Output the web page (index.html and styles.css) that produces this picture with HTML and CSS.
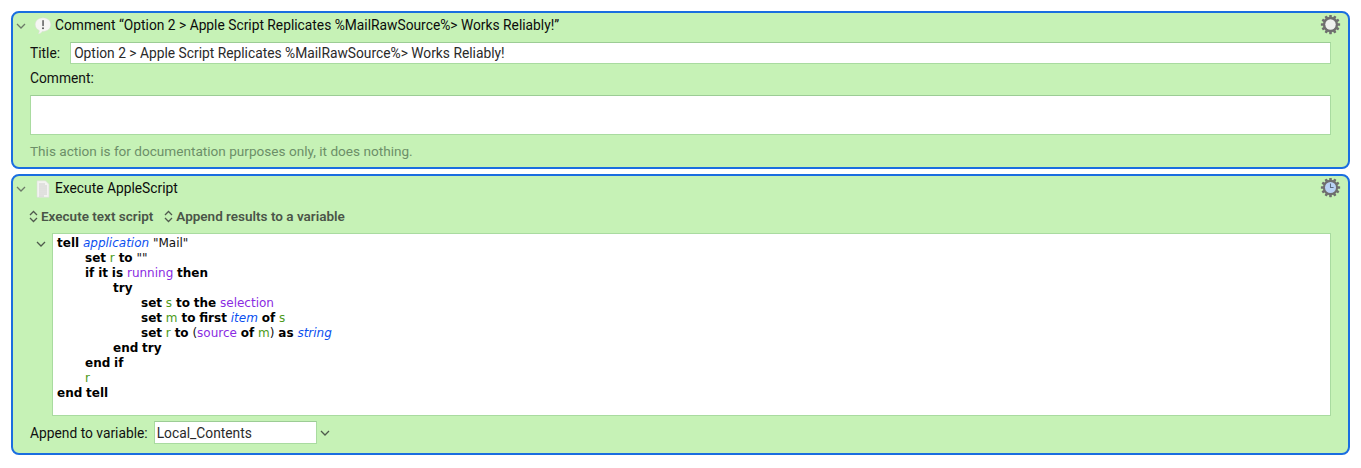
FILE: index.html
```html
<!DOCTYPE html>
<html lang="en">
<head>
<meta charset="utf-8">
<title>Keyboard Maestro actions</title>
<link rel="stylesheet" href="styles.css">
</head>
<body>
<section class="card card-comment">
  <header class="head">
    <svg class="chev" viewBox="0 0 10 6" width="10" height="6"><path d="M1 1l4 4 4-4" fill="none" stroke="#6c7a68" stroke-width="1.3"/></svg>
    <svg class="icon" viewBox="0 0 18 18" width="18" height="18"><path d="M9 .8c4.600 0 7.800 3 7.800 6.800 0 3.800-3.200 6.800-7.800 6.800l-.8 0c-1 1.300-2.300 2.200-3.900 2.500.7-.9 1-1.900 1-3.300C2.600 12.300 1.200 10.100 1.200 7.600 1.200 3.800 4.400.8 9 .8z" fill="#f6f6f4" stroke="#d6ddd0" stroke-width=".5"/><rect x="8.300" y="3" width="1.500" height="6.200" rx=".7" fill="#5a5a5a"/><circle cx="9" cy="11.200" r="1" fill="#5a5a5a"/></svg>
    <span class="head-title">Comment “Option 2 &gt; Apple Script Replicates %MailRawSource%&gt; Works Reliably!”</span>
    <svg class="gear" viewBox="0 0 24 24" width="21" height="21">
      <g fill="#6f6f6f"><circle cx="12" cy="12" r="8.800"/><rect x="10.500" y="1" width="3" height="22" rx=".5"/><rect x="10.500" y="1" width="3" height="22" rx=".5" transform="rotate(30 12 12)"/><rect x="10.500" y="1" width="3" height="22" rx=".5" transform="rotate(60 12 12)"/><rect x="10.500" y="1" width="3" height="22" rx=".5" transform="rotate(90 12 12)"/><rect x="10.500" y="1" width="3" height="22" rx=".5" transform="rotate(120 12 12)"/><rect x="10.500" y="1" width="3" height="22" rx=".5" transform="rotate(150 12 12)"/></g>
      <circle cx="12" cy="12" r="6" fill="#eef0ee"/>
    </svg>
  </header>
  <div class="title-row">
    <span class="label">Title:</span>
    <div class="field field-title">Option 2 &gt; Apple Script Replicates %MailRawSource%&gt; Works Reliably!</div>
  </div>
  <div class="label comment-label">Comment:</div>
  <div class="field field-comment"></div>
  <p class="note">This action is for documentation purposes only, it does nothing.</p>
</section>

<section class="card card-script">
  <header class="head">
    <svg class="chev" viewBox="0 0 10 6" width="10" height="6"><path d="M1 1l4 4 4-4" fill="none" stroke="#6c7a68" stroke-width="1.3"/></svg>
    <svg class="icon" viewBox="0 0 18 18" width="18" height="18"><path d="M3 .8h8.500l3.500 3.500v13h-12z" fill="#f3f3f1" stroke="#dcdfd8" stroke-width=".6"/><path d="M5 4h6M5 6h8M5 8h8M5 10h8M5 12h8M5 14h8M5 16h5" stroke="#c4c4c4" stroke-width=".8"/></svg>
    <span class="head-title">Execute AppleScript</span>
    <svg class="gear" viewBox="0 0 24 24" width="21" height="21">
      <g fill="#6f6f6f"><circle cx="12" cy="12" r="8.800"/><rect x="10.500" y="1" width="3" height="22" rx=".5"/><rect x="10.500" y="1" width="3" height="22" rx=".5" transform="rotate(30 12 12)"/><rect x="10.500" y="1" width="3" height="22" rx=".5" transform="rotate(60 12 12)"/><rect x="10.500" y="1" width="3" height="22" rx=".5" transform="rotate(90 12 12)"/><rect x="10.500" y="1" width="3" height="22" rx=".5" transform="rotate(120 12 12)"/><rect x="10.500" y="1" width="3" height="22" rx=".5" transform="rotate(150 12 12)"/></g>
      <circle cx="12" cy="12" r="6.300" fill="#b9d2f5"/>
      <path d="M12 7.500V12h3.500" fill="none" stroke="#5b6b80" stroke-width="1.200"/>
    </svg>
  </header>
  <div class="selects">
    <span class="select"><svg class="updown" viewBox="0 0 9 13" width="9" height="13"><path d="M1 5l3.500-3.500L8 5M1 8l3.500 3.500L8 8" fill="none" stroke="#505a4e" stroke-width="1.300"/></svg>Execute text script</span>
    <span class="select"><svg class="updown" viewBox="0 0 9 13" width="9" height="13"><path d="M1 5l3.500-3.500L8 5M1 8l3.500 3.500L8 8" fill="none" stroke="#505a4e" stroke-width="1.300"/></svg>Append results to a variable</span>
  </div>
  <div class="script-row">
    <svg class="chev chev-script" viewBox="0 0 10 6" width="10" height="6"><path d="M1 1l4 4 4-4" fill="none" stroke="#4e5a4c" stroke-width="1.300"/></svg>
    <pre class="script"><b>tell</b> <i class="cls">application</i> "Mail"
<span class="t1"><b>set</b> <span class="var">r</span> <b>to</b> ""</span>
<span class="t1"><b>if</b> <b>it</b> <b>is</b> <span class="prop">running</span> <b>then</b></span>
<span class="t2"><b>try</b></span>
<span class="t3"><b>set</b> <span class="var">s</span> <b>to</b> <b>the</b> <span class="prop">selection</span></span>
<span class="t3"><b>set</b> <span class="var">m</span> <b>to</b> <b>first</b> <i class="cls">item</i> <b>of</b> <span class="var">s</span></span>
<span class="t3"><b>set</b> <span class="var">r</span> <b>to</b> (<span class="prop">source</span> <b>of</b> <span class="var">m</span>) <b>as</b> <i class="cls">string</i></span>
<span class="t2"><b>end</b> <b>try</b></span>
<span class="t1"><b>end</b> <b>if</b></span>
<span class="t1"><span class="var">r</span></span>
<b>end</b> <b>tell</b></pre>
  </div>
  <div class="append-row">
    <span class="label">Append to variable:</span>
    <div class="field field-var">Local_Contents</div>
    <svg class="chev chev-var" viewBox="0 0 10 6" width="10" height="6"><path d="M1 1l4 4 4-4" fill="none" stroke="#4e5a4c" stroke-width="1.300"/></svg>
  </div>
</section>
</body>
</html>
```
FILE: styles.css
```css
html, body { margin: 0; padding: 0; background: #fff; }
body {
  padding: 11px 11px 0;
  font-family: Roboto, "Liberation Sans", sans-serif;
  font-size: 13.8px;
  color: #111;
  box-sizing: border-box;
  height: 468px;
  overflow: hidden;
}
.card {
  box-sizing: border-box;
  background: #c6f2b6;
  border: 2px solid #1a6ee0;
  border-radius: 8px;
  padding: 0 17px;
}
.card-comment { height: 158px; }
.card-script { height: 281px; margin-top: 5px; }
.head {
  display: flex;
  align-items: center;
  height: 25px;
  margin-left: -14px;
  margin-right: -10px;
}
.chev { flex: none; display: block; }
.icon { flex: none; margin-left: 8px; margin-right: 1px; }
.head-title { flex: 1; margin-left: 2px; margin-bottom: 2px; color: #0c0c0c; }
.gear { flex: none; margin-top: -2px; }
.label { color: #111; }
.field {
  box-sizing: border-box;
  background: #fff;
  border: 1px solid #a9dba0;
  border-top-color: #9ccc95;
  color: #2a2a2a;
}
.title-row {
  display: flex;
  align-items: center;
  gap: 10px;
  margin-top: 4px;
  height: 22px;
}
.field-title {
  flex: 1;
  height: 22px;
  line-height: 20px;
  padding: 0 3px;
}
.comment-label { margin-top: 6px; line-height: 17px; }
.field-comment { height: 40px; margin-top: 8px; }
.note {
  margin: 8px 0 0;
  font-size: 13.6px;
  line-height: 17px;
  color: #6c8f68;
}
.selects {
  display: flex;
  gap: 11px;
  margin-top: 4px;
  height: 22px;
  align-items: center;
  margin-left: -1px;
}
.select {
  display: flex;
  align-items: center;
  gap: 3px;
  font-weight: 600;
  font-size: 13.5px;
  color: #4a5548;
}
.script-row {
  display: flex;
  align-items: flex-start;
  margin-top: 6px;
}
.chev-script { margin-top: 8px; margin-left: 6px; margin-right: 6px; }
.script {
  flex: 1;
  box-sizing: border-box;
  height: 183px;
  margin: 0;
  background: #fff;
  border: 1px solid #a9dba0;
  padding: 2px 4px;
  font-family: "DejaVu Sans", Verdana, sans-serif;
  font-size: 12px;
  line-height: 15px;
  color: #111;
  white-space: pre;
}
.script b { color: #000; font-weight: 700; }
.t1 { display: inline-block; padding-left: 28px; }
.t2 { display: inline-block; padding-left: 56px; }
.t3 { display: inline-block; padding-left: 84px; }
.cls { color: #0b4ff0; font-style: italic; }
.var { color: #4c9a1a; }
.prop { color: #8a2be2; }
.append-row {
  display: flex;
  align-items: center;
  margin-top: 5px;
  height: 23px;
}
.field-var {
  width: 163px;
  height: 23px;
  line-height: 22px;
  margin-left: 6px;
  padding: 0 2px;
}
.chev-var { margin-left: 3px; }
```
